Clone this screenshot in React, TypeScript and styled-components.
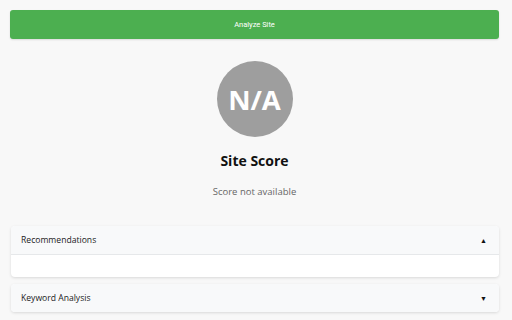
import React from "react";
import styled, { createGlobalStyle } from "styled-components";

const Global = createGlobalStyle`
  html, body { margin: 0; padding: 0; background: #f8f8f8; }
  body { font-family: "Open Sans", "Noto Sans", sans-serif; }
`;

const Page = styled.div`
  padding: 10px 13px 10px 10px;
  display: flex;
  flex-direction: column;
`;

const AnalyzeButton = styled.button`
  height: 29px;
  width: 100%;
  background: #4caf50;
  border: none;
  border-radius: 3px;
  color: #fff;
  font-family: Roboto, "Liberation Sans", Arial, sans-serif;
  font-size: 7.5px;
  box-shadow: 0 1px 2px rgba(0, 0, 0, 0.12);
`;

const ScoreSection = styled.div`
  display: flex;
  flex-direction: column;
  align-items: center;
  padding-top: 22px;
`;

const Circle = styled.div`
  width: 76px;
  height: 76px;
  border-radius: 50%;
  background: #9e9e9e;
  color: #fff;
  display: flex;
  align-items: center;
  justify-content: center;
  font-weight: 700;
  font-size: 27.5px;
`;

const Title = styled.div`
  margin-top: 14px;
  font-size: 14px;
  font-weight: 700;
  color: #111;
`;

const Subtitle = styled.div`
  margin-top: 15px;
  font-size: 9.5px;
  color: #666;
`;

const Cards = styled.div`
  margin-top: 28px;
  display: flex;
  flex-direction: column;
  gap: 7px;
  padding-left: 1px;
`;

const Card = styled.div`
  background: #fff;
  border-radius: 4px;
  box-shadow: 0 1px 3px rgba(0, 0, 0, 0.13);
  overflow: hidden;
`;

const CardHeader = styled.div<{ $open?: boolean }>`
  height: 28px;
  background: #f8f9fa;
  display: flex;
  align-items: center;
  justify-content: space-between;
  padding: 0 10px;
  font-size: 8.6px;
  color: #1a1a1a;
  border-bottom: ${(p) => (p.$open ? "1px solid #e6e8ea" : "none")};
`;

const Arrow = styled.span`
  font-size: 7px;
  color: #111;
  margin-right: 2px;
`;

const CardBody = styled.div`
  height: 22px;
`;

export default function App() {
  return (
    <>
      <Global />
      <Page>
        <AnalyzeButton>Analyze Site</AnalyzeButton>
        <ScoreSection>
          <Circle>N/A</Circle>
          <Title>Site Score</Title>
          <Subtitle>Score not available</Subtitle>
        </ScoreSection>
        <Cards>
          <Card>
            <CardHeader $open>
              <span>Recommendations</span>
              <Arrow>▲</Arrow>
            </CardHeader>
            <CardBody />
          </Card>
          <Card>
            <CardHeader>
              <span>Keyword Analysis</span>
              <Arrow>▼</Arrow>
            </CardHeader>
          </Card>
        </Cards>
      </Page>
    </>
  );
}
